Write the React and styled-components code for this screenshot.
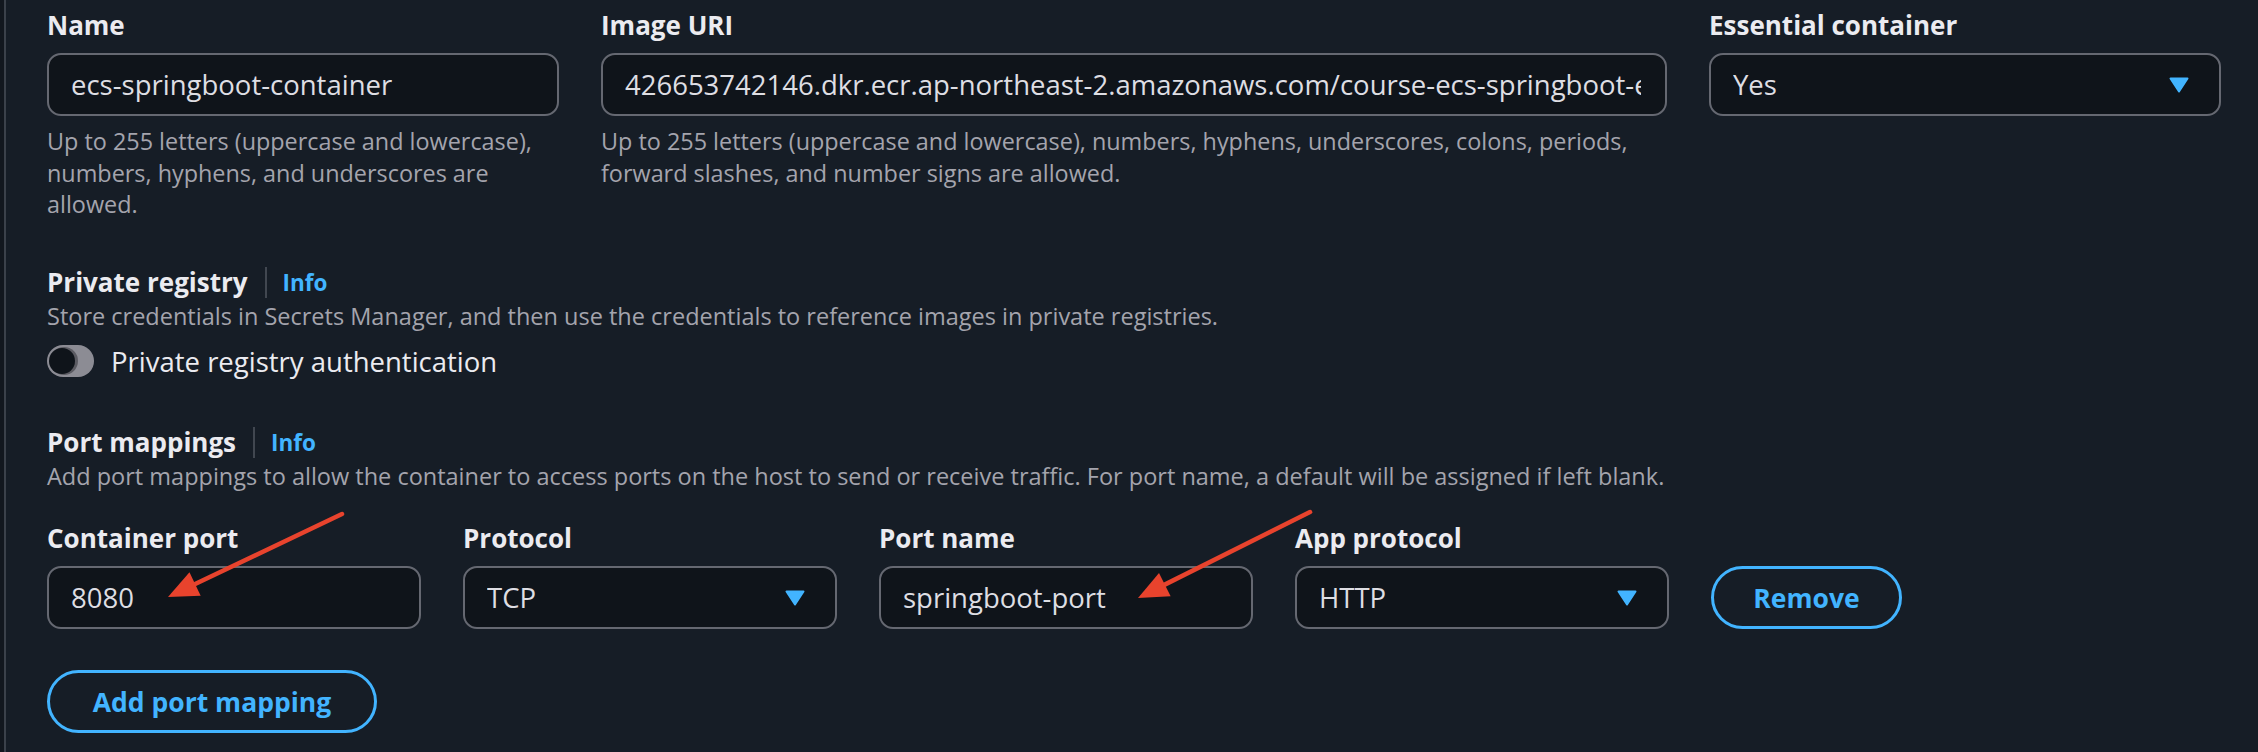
import styled, { createGlobalStyle } from "styled-components";

const GlobalStyle = createGlobalStyle`
  html, body {
    margin: 0;
    padding: 0;
    background: #12171e;
  }
  body {
    font-family: "Open Sans", "Noto Sans", sans-serif;
    color: #dedee3;
  }
`;

const Page = styled.div`
  position: relative;
  width: 2258px;
  height: 752px;
  box-sizing: border-box;
  padding-left: 4px;
  background: #12171e;
  overflow: hidden;
`;

const Panel = styled.div`
  height: 100%;
  box-sizing: border-box;
  border-left: 2px solid #3b414a;
  background: #161d26;
  padding: 7px 0 0 41px;
`;

const TopGrid = styled.div`
  display: grid;
  grid-template-columns: repeat(4, 512px);
  column-gap: 42px;
  align-items: start;
`;

const Field = styled.div`
  grid-column: span ${(p) => p.$span || 1};
  min-width: 0;
`;

const Label = styled.div`
  font-size: 26px;
  font-weight: 700;
  line-height: 36px;
  color: #ebebf0;
  white-space: nowrap;
`;

const Control = styled.div`
  position: relative;
  margin-top: 10px;
  height: 63px;
  box-sizing: border-box;
  border: 2px solid #656871;
  border-radius: 14px;
  background: #0f141a;
  display: flex;
  align-items: center;
  padding: 0 ${(p) => (p.$select ? "30px" : "24px")} 0 22px;
  font-size: 27.5px;
  color: #dedee3;
  overflow: hidden;
`;

const Value = styled.span`
  flex: 1;
  min-width: 0;
  white-space: nowrap;
  overflow: hidden;
`;

const Caret = styled.svg`
  flex: none;
  width: 20px;
  height: 16px;
  margin-left: 12px;
`;

const Help = styled.div`
  margin-top: 10px;
  font-size: 23.4px;
  line-height: 31.5px;
  color: #a4a4ad;
`;

const Section = styled.div`
  margin-top: ${(p) => p.$top}px;
`;

const HeadingRow = styled.div`
  display: flex;
  align-items: center;
  height: 36px;
`;

const Heading = styled.span`
  font-size: 26px;
  font-weight: 700;
  color: #ebebf0;
`;

const Divider = styled.span`
  width: 2px;
  height: 31px;
  background: #414750;
  margin: 0 16px 0 17px;
`;

const InfoLink = styled.span`
  font-size: 22.5px;
  font-weight: 700;
  color: #42b4ff;
`;

const Description = styled.div`
  margin-top: 1px;
  font-size: 23.5px;
  line-height: 31.5px;
  color: #a4a4ad;
  white-space: nowrap;
`;

const ToggleRow = styled.div`
  display: flex;
  align-items: center;
  margin-top: 12.5px;
  height: 32px;
`;

const Track = styled.span`
  position: relative;
  width: 47px;
  height: 32px;
  border-radius: 16px;
  background: #8c8c94;
  flex: none;
`;

const Knob = styled.span`
  position: absolute;
  left: 2px;
  top: 3px;
  width: 26px;
  height: 26px;
  border-radius: 50%;
  background: #0f141a;
  box-shadow: 2px 0 0 1px #5b5b62;
`;

const ToggleText = styled.span`
  margin-left: 17px;
  font-size: 27.5px;
  color: #ebebf0;
`;

const PortGrid = styled.div`
  display: grid;
  grid-template-columns: repeat(4, 374px) 191px;
  column-gap: 42px;
  margin-top: 27.5px;
`;

const PillButton = styled.button`
  box-sizing: border-box;
  height: 63px;
  width: ${(p) => p.$width}px;
  align-self: end;
  margin-top: ${(p) => p.$top || 0}px;
  border: 3px solid #42b4ff;
  border-radius: 32px;
  background: transparent;
  color: #42b4ff;
  font-family: inherit;
  font-size: 26.5px;
  font-weight: 700;
  padding: 0;
  display: block;
`;

const Annotations = styled.svg`
  position: absolute;
  left: 0;
  top: 0;
  pointer-events: none;
`;

function DropCaret() {
  return (
    <Caret viewBox="0 0 20 16">
      <path d="M1.5 1.5 H18.5 L10 14.5 Z" fill="#42b4ff" stroke="#42b4ff" strokeWidth="2" strokeLinejoin="round" />
    </Caret>
  );
}

function TextField({ label, value, help, span }) {
  return (
    <Field $span={span}>
      <Label>{label}</Label>
      <Control>
        <Value>{value}</Value>
      </Control>
      {help && <Help>{help}</Help>}
    </Field>
  );
}

function SelectField({ label, value, span }) {
  return (
    <Field $span={span}>
      <Label>{label}</Label>
      <Control $select>
        <Value>{value}</Value>
        <DropCaret />
      </Control>
    </Field>
  );
}

function Arrow({ x1, y1, x2, y2 }) {
  const dx = x2 - x1;
  const dy = y2 - y1;
  const len = Math.hypot(dx, dy);
  const ux = dx / len;
  const uy = dy / len;
  const headLen = 30;
  const half = 13;
  const bx = x2 - ux * headLen;
  const by = y2 - uy * headLen;
  const pts = [
    [x2, y2],
    [bx - uy * half, by + ux * half],
    [bx + uy * half, by - ux * half],
  ]
    .map((p) => p.join(","))
    .join(" ");
  return (
    <g>
      <line x1={x1} y1={y1} x2={bx + ux * 4} y2={by + uy * 4} stroke="#e8432d" strokeWidth="4.5" strokeLinecap="round" />
      <polygon points={pts} fill="#e8432d" />
    </g>
  );
}

export default function App() {
  return (
    <>
      <GlobalStyle />
      <Page>
        <Panel>
          <TopGrid>
            <TextField
              label="Name"
              value="ecs-springboot-container"
              help="Up to 255 letters (uppercase and lowercase), numbers, hyphens, and underscores are allowed."
            />
            <TextField
              span={2}
              label="Image URI"
              value="426653742146.dkr.ecr.ap-northeast-2.amazonaws.com/course-ecs-springboot-ecr:latest"
              help="Up to 255 letters (uppercase and lowercase), numbers, hyphens, underscores, colons, periods, forward slashes, and number signs are allowed."
            />
            <SelectField label="Essential container" value="Yes" />
          </TopGrid>

          <Section $top={43.5}>
            <HeadingRow>
              <Heading>Private registry</Heading>
              <Divider />
              <InfoLink>Info</InfoLink>
            </HeadingRow>
            <Description>
              Store credentials in Secrets Manager, and then use the credentials to reference images in private registries.
            </Description>
            <ToggleRow>
              <Track>
                <Knob />
              </Track>
              <ToggleText>Private registry authentication</ToggleText>
            </ToggleRow>
          </Section>

          <Section $top={47}>
            <HeadingRow>
              <Heading>Port mappings</Heading>
              <Divider />
              <InfoLink>Info</InfoLink>
            </HeadingRow>
            <Description>
              Add port mappings to allow the container to access ports on the host to send or receive traffic. For port name, a default will be assigned if left blank.
            </Description>
            <PortGrid>
              <TextField label="Container port" value="8080" />
              <SelectField label="Protocol" value="TCP" />
              <TextField label="Port name" value="springboot-port" />
              <SelectField label="App protocol" value="HTTP" />
              <PillButton $width={191}>Remove</PillButton>
            </PortGrid>
            <PillButton $width={330} $top={41}>
              Add port mapping
            </PillButton>
          </Section>
        </Panel>
        <Annotations width="2258" height="752" viewBox="0 0 2258 752">
          <Arrow x1={342} y1={514} x2={168} y2={597} />
          <Arrow x1={1310} y1={512} x2={1138} y2={598} />
        </Annotations>
      </Page>
    </>
  );
}
